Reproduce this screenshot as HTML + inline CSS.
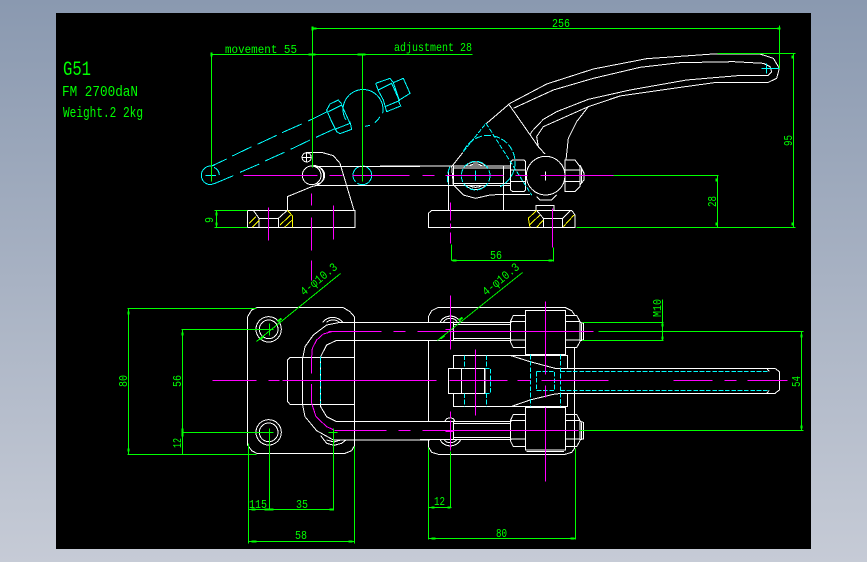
<!DOCTYPE html>
<html><head><meta charset="utf-8"><style>
html,body{margin:0;padding:0;width:867px;height:562px;overflow:hidden;background:linear-gradient(180deg,#8a99b0,#c6cbd6)}
svg{position:absolute;left:0;top:0;display:block}
text{fill:#0f0;font-family:"Liberation Mono",monospace;font-size:12px}
</style></head><body>
<svg width="867" height="562" viewBox="0 0 867 562" shape-rendering="crispEdges">
<rect x="56" y="13" width="755" height="536" fill="#000"/>

<!-- Front-left view -->
<g transform="translate(190,60) scale(.33333)" stroke-width="3" fill="none">
<g stroke="#0ff">
<path d="M62 318A28 28 0 1 0 62 374L75 370M62 318L75 315M72 322A28 28 0 0 1 88 345"/>
<path d="M65 318L110 297M127 288L185 260M202 253L260 226M276 218L335 192M355 183L412 155"/>
<path d="M75 370L130 347M150 337L208 312M225 303L283 277M302 268L360 240M378 232L437 205"/>
<path d="M410 150L420 132L445 120L455 132M410 150L425 185L440 215L450 221L485 208L480 185M415 155L455 135L480 190L437 207"/>
<path d="M468 180A60 60 0 1 1 578 160M570 170A60 60 0 0 1 555 188M540 196L525 199"/>
<path d="M557 70L600 55L610 68L640 55L660 100L625 122L632 138L590 155L580 120L565 92L557 70M565 90L605 70L628 122L585 140M610 68L628 120"/>
<path d="M46 346H78"/>
<circle cx="517" cy="346" r="28" stroke-dasharray="60 6"/>
</g>
<g stroke="#fff">
<path d="M172 451H495V502H172ZM207 502V475L190 451M207 475H265V502M265 475L292 451"/>
<path d="M292 451V410L370 378"/>
<circle cx="365" cy="346" r="28"/>
<path d="M370 316A30 30 0 0 1 370 378M378 320A26 26 0 0 1 378 372"/>
<path d="M370 319H690M375 376H690"/>
<circle cx="350" cy="292" r="14"/>
<path d="M350 278V306M336 292H364M350 278H398L430 287L450 310L492 451"/>
</g>
<g stroke="#ff0">
<path d="M177 490L197 470M187 502L208 480M270 495L302 465M283 502L307 480M292 451L308 468V502"/>
</g>
</g>

<!-- Front-right view -->
<g transform="translate(380,10) scale(.33333)" stroke-width="3" fill="none">
<g stroke="#fff">
<path d="M320 340L390 280L500 222L640 177L800 146L1000 132H1140L1180 145L1198 175L1190 205L1165 217H1010L880 235L720 258L625 290L590 335L565 385L558 450"/>
<path d="M400 295L520 240L640 205L780 172L900 158L1060 155L1150 160L1170 170L1175 185L1165 196H1085L920 210L750 240L625 268L530 305L490 328L455 365L450 375"/>
<path d="M625 290L490 350L470 380L475 410L495 432M388 285L475 410"/>
<path d="M0 468H392M0 527H392M220 474H392M220 520H392M220 468V527"/>
<path d="M248 428L215 470L220 525L250 555L287 565L330 555L370 553H450"/>
<path d="M257 468A42 42 0 0 1 317 468M267 468A35 35 0 0 1 307 468M258 527A42 42 0 0 0 316 527M269 527A35 35 0 0 0 305 527"/>
<path d="M205 480V601M370 470V601"/>
<path d="M145 652H585V615L575 601H155L145 610ZM398 450H432L437 455V540L432 545H398L392 540V455ZM392 480H437M392 515H437"/>
<circle cx="497" cy="497" r="58"/>
<path d="M497 485V512M483 497H510"/>
<path d="M555 450H585L600 470V530L585 545H555ZM555 480H600M555 515H600M600 465L612 490V510L600 525M605 475V520"/>
<path d="M470 560L480 570H515L530 555M468 600V587H522V600"/>
<path d="M490 652V625H548V652M470 601L490 625M548 625L572 601"/>
</g>
<g stroke="#0ff">
<path d="M1145 176H1198M1160 161V190"/>
<path d="M250 425L318 340" stroke-dasharray="14 4"/>
<path d="M318 340L455 555" stroke-dasharray="14 5"/>
<path d="M250 425A81 81 0 1 1 360 530M210 470A81 81 0 0 0 205 525" stroke-dasharray="22 5"/>
<circle cx="287" cy="497" r="43" stroke-dasharray="18 5"/>
<path d="M287 482V512M272 497H302"/>
</g>
<g stroke="#ff0">
<path d="M470 601L445 625L450 652M448 645L480 615M470 652L490 630M550 650L582 615"/>
</g>
</g>

<!-- Plan view left -->
<g transform="translate(110,260) scale(.33333)" stroke-width="3" fill="none">
<g stroke="#fff">
<path d="M733 187V170L720 155L700 143H440L425 150L413 170V555L425 572L440 580H705L725 572L733 558V540M733 187V540"/>
<circle cx="476" cy="208" r="38"/><circle cx="476" cy="208" r="28"/>
<circle cx="476" cy="517" r="38"/><circle cx="476" cy="517" r="28"/>
<path d="M638 187A38 38 0 0 1 698 187M650 187A28 28 0 0 1 688 187"/>
<path d="M632 527L650 550L672 556L695 550L708 540M650 540L672 546L692 540"/>
<path d="M960 187H690L650 195L610 225L585 260L577 300V430L585 470L620 512L670 540H960"/>
<path d="M960 241H680L650 255L632 290V440L650 470L680 485H960"/>
<path d="M733 292H540L533 300V425L540 433H733"/>
</g>
<path stroke="#f0f" d="M605 290V340M605 372V430L618 470L650 500L672 510M605 290L607 265L620 240L640 222L665 215"/>
<path stroke="#0ff" d="M632 290V430" stroke-dasharray="14 5"/>
</g>

<!-- Plan view right -->
<g transform="translate(420,270) scale(.33333)" stroke-width="3" fill="none">
<g stroke="#fff">
<path d="M25 212V455M25 157V140L35 122L55 112H435L455 122L464 135M25 509V530L35 547L55 553H435L455 547L464 535V233"/>
<path d="M0 157H275M0 212H275M100 163H270M100 205H270M100 155V212"/>
<path d="M0 454H275M0 509H275M100 460H270M100 503H270M100 452V509"/>
<path d="M316 121H436V254H316ZM316 412H436V540H316ZM320 545H432"/>
<path d="M316 136H280L271 155V215L280 233H316M271 155H316M271 210H316"/>
<path d="M436 136H470L480 155V215L470 233H436M436 155H480M436 210H480M480 157L490 160V210L480 212M484 160V210"/>
<path d="M316 433H280L271 452V512L280 530H316M271 452H316M271 507H316"/>
<path d="M436 433H470L480 452V512L470 530H436M436 452H480M436 507H480M480 454L490 457V507L480 509M484 457V507"/>
<path d="M100 295V256H443V295M100 370V409H443V370"/>
<path d="M270 256L330 275L405 295H1065L1078 305V360L1065 370H425L400 373L330 390L275 409"/>
<path d="M85 295H195V370H85ZM125 295V370M193 295V370"/>
<path d="M1040 295L1048 304M1040 370L1048 361"/>
<path d="M60 157A35 35 0 0 1 122 157M70 157A24 24 0 0 1 112 157M60 509A35 35 0 0 0 122 509M72 509A24 24 0 0 0 110 509M75 454A16 16 0 0 1 105 454"/>
</g>
<g stroke="#0ff" stroke-dasharray="14 5">
<path d="M133 256V295M199 256V295M133 370V409M199 370V409"/>
<path d="M195 295H212V370H195"/>
<path d="M331 254V409M421 254V409"/>
<path d="M349 304H404V361H349Z"/>
<path d="M421 304H1048M421 361H1048"/>
</g>
</g>

<!-- straight lines -->
<g transform="translate(.5,.5)" stroke-width="1" fill="none">
<path stroke="#f0f" d="
M243 175H317M329 175H342M352 175H409M422 175H434M445 175H503M515 175H527M540 175H613
M268 207V240M311 193V205M311 217V250M311 260V280M333 205V239
M450 202V220M450 223V228M450 232V243M552 208V247
M212 380H256M268 380H279M282 380H436M449 380H507M517 380H530M541 380H608M673 380H712M724 380H736M747 380H787
M328 331H381M393 331H405M417 331H593
M334 430H386M398 430H410M422 430H578
M450 295V349M450 411V418M450 420V450M475 349V415M545 301V374M545 385V397M545 407V481
M445 329H453M445 431H453"/>
<path stroke="#0f0" d="
M312 26V167M311 28H779M779 25V68
M211 54H472M211 54V181M362 54V181
M717 53H795M793 53V227M576 227H795
M613 175H718M717 175V227
M451 244V260M451 260H553M553 247V261
M214 210H247M214 227H247M216 210V227
M127 308H256M127 454H256M128 308V454
M181 329H273M181 432H273M182 329V454
M269 323V335M269 428V510M333 428V510M328 432H337
M248 443V543M354 446V543M248 509H333M248 541H354
M256 341L340 273M437 340L522 272
M582 322H663M582 340H663M662 299V340
M598 331H803M579 430H803M801 331V430
M428 447V539M450 451V507M575 448V539M428 507H451M428 538H575"/>
<path stroke="#0f0" stroke-width="2" d="
M312 26V30M312 28H316M777 28H780M211 52V56M361 54H365M308 54H315M357 54H362
M792 55V58M792 222V225M716 178V181M716 222V225M452 260H456M548 260H552
M216 212V215M216 222V225M128 311V314M128 448V451M182 332V335M182 428V436
M251 509H255M264 509H273M329 509H333M251 541H256M348 541H352
M259 339L263 336M277 321L281 318
M440 338L444 335M458 320L462 317
M662 323V326M662 336V339M801 334V337M801 425V428
M431 507H434M447 507H450M431 538H435M570 538H574"/>
</g>

<!-- text -->
<g shape-rendering="auto">
<text x="63" y="75" textLength="28" lengthAdjust="spacingAndGlyphs" style="font-size:20px">G51</text>
<text x="62" y="96" textLength="76" lengthAdjust="spacingAndGlyphs" style="font-size:15px">FM 2700daN</text>
<text x="63" y="117" textLength="80" lengthAdjust="spacingAndGlyphs" style="font-size:15px">Weight.2 2kg</text>
<text x="225" y="53" textLength="72" lengthAdjust="spacingAndGlyphs">movement 55</text>
<text x="394" y="51" textLength="78" lengthAdjust="spacingAndGlyphs">adjustment 28</text>
<text x="552" y="27" textLength="18" lengthAdjust="spacingAndGlyphs">256</text>
<text x="490" y="259" textLength="12" lengthAdjust="spacingAndGlyphs">56</text>
<text x="249" y="508" textLength="18" lengthAdjust="spacingAndGlyphs">115</text>
<text x="296" y="508" textLength="12" lengthAdjust="spacingAndGlyphs">35</text>
<text x="295" y="539" textLength="12" lengthAdjust="spacingAndGlyphs">58</text>
<text x="434" y="505" textLength="11" lengthAdjust="spacingAndGlyphs">12</text>
<text x="496" y="537" textLength="11" lengthAdjust="spacingAndGlyphs">80</text>
<text transform="translate(127,387) rotate(-90)" textLength="12" lengthAdjust="spacingAndGlyphs">80</text>
<text transform="translate(181,387) rotate(-90)" textLength="12" lengthAdjust="spacingAndGlyphs">56</text>
<text transform="translate(181,448) rotate(-90)" textLength="10" lengthAdjust="spacingAndGlyphs">12</text>
<text transform="translate(213,223) rotate(-90)" textLength="6" lengthAdjust="spacingAndGlyphs">9</text>
<text transform="translate(716,207) rotate(-90)" textLength="11" lengthAdjust="spacingAndGlyphs">28</text>
<text transform="translate(792,146) rotate(-90)" textLength="11" lengthAdjust="spacingAndGlyphs">95</text>
<text transform="translate(661,317) rotate(-90)" textLength="18" lengthAdjust="spacingAndGlyphs">M10</text>
<text transform="translate(800,387) rotate(-90)" textLength="11" lengthAdjust="spacingAndGlyphs">54</text>
<text transform="translate(304,296) rotate(-39)" textLength="44" lengthAdjust="spacingAndGlyphs">4-φ10.3</text>
<text transform="translate(486,296) rotate(-39)" textLength="44" lengthAdjust="spacingAndGlyphs">4-φ10.3</text>
</g>
</svg>
</body></html>
